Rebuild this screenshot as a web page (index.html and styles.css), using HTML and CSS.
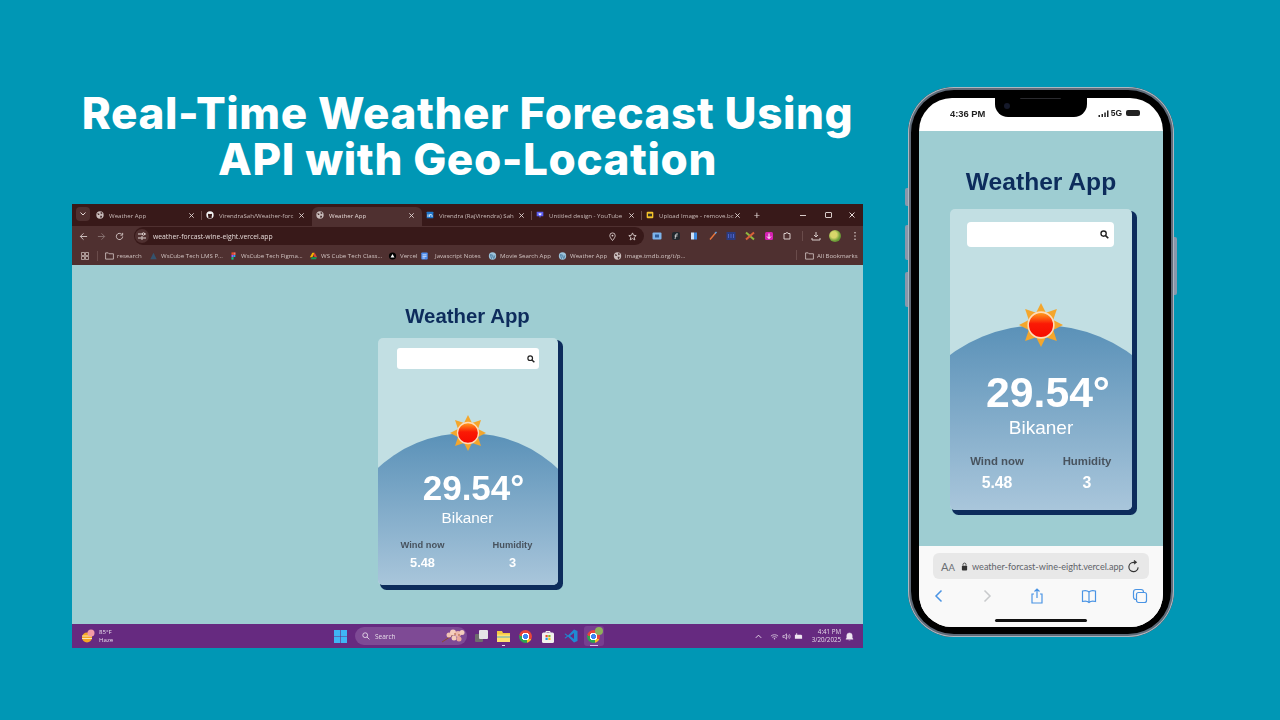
FILE: index.html
```html
<!DOCTYPE html>
<html lang="en">
<head>
<meta charset="utf-8">
<title>Real-Time Weather Forecast</title>
<link rel="stylesheet" href="styles.css">
</head>
<body>
<svg class="sprite" aria-hidden="true">
  <defs>
    <linearGradient id="sung" x1="0" y1="0" x2="0" y2="1">
      <stop offset="0" stop-color="#ffa51e"/><stop offset=".45" stop-color="#fb1a05"/><stop offset="1" stop-color="#f50a00"/>
    </linearGradient>
  </defs>
  <symbol id="sun" viewBox="0 0 36 36">
    <g fill="#f4a62c">
      <path id="ray" d="M18 0l4 8h-8z"/>
      <path d="M18 36l4-8h-8z"/><path d="M0 18l8-4v8z"/><path d="M36 18l-8-4v8z"/>
      <path d="M5 5l9 3-6 6z"/><path d="M31 5l-9 3 6 6z"/><path d="M5 31l9-3-6-6z"/><path d="M31 31l-9-3 6-6z"/>
    </g>
    <circle cx="18" cy="18" r="10.5" fill="url(#sung)" stroke="#ffdcb8" stroke-width="1.3"/>
  </symbol>
  <symbol id="globe" viewBox="0 0 12 12">
    <circle cx="6" cy="6" r="5.5" fill="#c9bcbb"/>
    <path d="M2 3l3 1 0 2-2 0zM7 1l3 2-2 2-1-1zM6 7l3 0 0 2-2 2z" fill="#4b3030"/>
  </symbol>
  <symbol id="wp" viewBox="0 0 12 12">
    <circle cx="6" cy="6" r="5.5" fill="#9dc4dc"/>
    <path d="M2.5 4l2 6 1-3-1-3zM6 4l2 6 1.6-5" fill="none" stroke="#3d6f96" stroke-width="1"/>
  </symbol>
  <symbol id="x" viewBox="0 0 8 8">
    <path d="M1.5 1.5l5 5M6.500 1.500l-5 5" stroke="#e6dad8" stroke-width="1" fill="none"/>
  </symbol>
  <symbol id="folder" viewBox="0 0 10 9">
    <path d="M.6 1h3l1 1h4.800v6H.6z" fill="none" stroke="#d5c8c6" stroke-width=".9"/>
  </symbol>
  <symbol id="mag" viewBox="0 0 10 10">
    <circle cx="4" cy="4" r="2.900" fill="none" stroke="#222" stroke-width="1.500"/>
    <path d="M6.200 6.200l3 3" stroke="#222" stroke-width="1.800"/>
  </symbol>
</svg>

<main class="slide">
  <section class="left">
    <h1 class="headline">Real-Time Weather Forecast Using<br>API with Geo-Location</h1>

    <div class="browser">
      <div class="tabstrip">
        <span class="tab-menu"><svg width="6" height="4" viewBox="0 0 6 4"><path d="M.5.500L3 3 5.500.500" fill="none" stroke="#e6dad8"/></svg></span>
        <div class="tab">
          <svg class="fav"><use href="#globe"/></svg><span class="tab-title">Weather App</span><svg class="tab-x"><use href="#x"/></svg>
        </div>
        <div class="tab tab-sep">
          <svg class="fav" viewBox="0 0 12 12"><circle cx="6" cy="6" r="5.500" fill="#f2f2f2"/><path d="M3.500 11V8.500L3 6.500V4l1.500.5h3L9 4v2.500l-.5 2V11z" fill="#3a1a1a"/></svg><span class="tab-title">VirendraSah/Weather-forc</span><svg class="tab-x"><use href="#x"/></svg>
        </div>
        <div class="tab tab-active">
          <svg class="fav"><use href="#globe"/></svg><span class="tab-title">Weather App</span><svg class="tab-x"><use href="#x"/></svg>
        </div>
        <div class="tab">
          <svg class="fav" viewBox="0 0 12 12"><rect x="1" y="1" width="10" height="10" rx="1" fill="#1c74c9"/><path d="M3 5v4M5.500 9V5M5.500 7c0-2.500 3.500-2.500 3.500 0v2" stroke="#fff" stroke-width="1.200" fill="none"/></svg><span class="tab-title">Virendra (RajVirendra) Sah</span><svg class="tab-x"><use href="#x"/></svg>
        </div>
        <div class="tab tab-sep">
          <svg class="fav" viewBox="0 0 12 12"><path d="M1 1h10v7H7l-1 3-1-3H1z" fill="#5a5cf0"/><path d="M6 7L3.500 4.500C3.500 3 5.500 3 6 4c.5-1 2.500-1 2.500.5z" fill="#f5f5ff"/></svg><span class="tab-title">Untitled design - YouTube</span><svg class="tab-x"><use href="#x"/></svg>
        </div>
        <div class="tab tab-sep tab-last">
          <svg class="fav" viewBox="0 0 12 12"><rect x="1" y="1" width="10" height="10" rx="1.500" fill="#f4c22b"/><path d="M3 4h6v4H3z" fill="#3b3325"/></svg><span class="tab-title">Upload Image - remove.bc</span><svg class="tab-x"><use href="#x"/></svg>
        </div>
        <span class="tab-plus">+</span>
        <div class="winctl">
          <span class="win-min"></span>
          <span class="win-max"></span>
          <svg class="win-x"><use href="#x"/></svg>
        </div>
      </div>

      <div class="toolbar">
        <div class="nav">
          <svg class="nav-ic" viewBox="0 0 10 10"><path d="M9 5H1.500M5 1.500L1.500 5 5 8.500" fill="none" stroke="#d8cbc9"/></svg>
          <svg class="nav-ic" viewBox="0 0 10 10"><path d="M1 5h7.500M5 1.500L8.500 5 5 8.500" fill="none" stroke="#8a7574"/></svg>
          <svg class="nav-ic" viewBox="0 0 10 10"><path d="M8.500 5A3.500 3.500 0 1 1 7.400 2.400M8.500 1v2.500H6" fill="none" stroke="#d8cbc9"/></svg>
        </div>
        <div class="omnibox">
          <span class="tune"><svg width="8" height="8" viewBox="0 0 8 8"><path d="M0 2h4M0 6h2M6 6h2M7 2h1" stroke="#e6dad8"/><circle cx="5.500" cy="2" r="1.200" fill="none" stroke="#e6dad8"/><circle cx="4" cy="6" r="1.200" fill="none" stroke="#e6dad8"/></svg></span>
          <span class="url">weather-forcast-wine-eight.vercel.app</span>
          <svg class="omni-ic" viewBox="0 0 10 10"><path d="M5 9.500C3 7 2 5.500 2 4a3 3 0 0 1 6 0c0 1.500-1 3-3 5.500z" fill="none" stroke="#e6dad8" stroke-width=".9"/><circle cx="5" cy="4" r="1" fill="#e6dad8"/></svg>
          <svg class="omni-ic" viewBox="0 0 10 10"><path d="M5 1l1.200 2.700 2.900.3-2.200 1.900.7 2.900L5 7.300 2.400 8.800l.7-2.900L.9 4l2.900-.3z" fill="none" stroke="#e6dad8" stroke-width=".9"/></svg>
        </div>
        <div class="exts">
          <svg class="ext" viewBox="0 0 10 10"><rect x=".5" y="1.500" width="9" height="7" rx="1" fill="#7cb4ec"/><rect x="3" y="3.500" width="4" height="3" fill="#2f5d9a"/></svg>
          <svg class="ext" viewBox="0 0 10 10"><rect x="1" y="1" width="8" height="8" rx="2" fill="#22282e"/><path d="M4 8l1-5h2M3.500 5h3" stroke="#e6e6e6" stroke-width=".8" fill="none"/></svg>
          <svg class="ext" viewBox="0 0 10 10"><path d="M2 1.500h3v7H2z" fill="#cfe2f7"/><path d="M5 1.500h3v7H5z" fill="#3e8ae0"/></svg>
          <svg class="ext" viewBox="0 0 10 10"><path d="M2 8.500L7.500 2" stroke="#e8743b" stroke-width="1.400"/><path d="M7 2.500L8.500 1" stroke="#5fa4e8" stroke-width="1.400"/></svg>
          <svg class="ext" viewBox="0 0 10 10"><rect x=".5" y="1" width="9" height="8" fill="#2b3b80"/><path d="M2.500 3v4M5 3v4M7.500 3v4" stroke="#4f63c7"/></svg>
          <svg class="ext" viewBox="0 0 10 10"><path d="M1 1.500l8 7" stroke="#8fb83f" stroke-width="2"/><path d="M9 1.500l-8 7" stroke="#d9603a" stroke-width="2"/></svg>
          <svg class="ext" viewBox="0 0 10 10"><rect x="1" y="1" width="8" height="8" rx="1.500" fill="#d621b3"/><path d="M5 2.500v5M3 5.500l2 2 2-2" stroke="#fff" fill="none"/></svg>
          <svg class="ext" viewBox="0 0 10 10"><path d="M2 2.500h2a1 1 0 0 1 2 0h2v5.500H2z" fill="none" stroke="#d8cbc9"/></svg>
          <span class="ext-sep"></span>
          <svg class="ext" viewBox="0 0 10 10"><path d="M5 1v5M3 4l2 2 2-2M1 7v2h8V7" fill="none" stroke="#d8cbc9"/></svg>
          <span class="avatar"></span>
          <svg class="ext" viewBox="0 0 10 10"><circle cx="5" cy="1.800" r=".8" fill="#d8cbc9"/><circle cx="5" cy="5" r=".8" fill="#d8cbc9"/><circle cx="5" cy="8.200" r=".8" fill="#d8cbc9"/></svg>
        </div>
      </div>

      <div class="bookmarks">
        <div class="bm-apps">
          <svg width="8" height="8" viewBox="0 0 8 8"><path d="M.5.500h3v3h-3zM4.500.500h3v3h-3zM.5 4.500h3v3h-3zM4.500 4.500h3v3h-3z" fill="none" stroke="#d5c8c6" stroke-width=".7"/></svg>
        </div>
        <div class="bm"><svg class="bm-ic"><use href="#folder"/></svg><span>research</span></div>
        <div class="bm"><svg class="bm-ic" viewBox="0 0 10 10"><path d="M5 1L1 9h8z" fill="#34536e"/></svg><span>WsCube Tech LMS P...</span></div>
        <div class="bm"><svg class="bm-ic" viewBox="0 0 10 10"><rect x="2.500" y=".5" width="2.500" height="3" fill="#f24e1e"/><rect x="5" y=".5" width="2.500" height="3" fill="#ff7262"/><rect x="2.500" y="3.500" width="2.500" height="3" fill="#a259ff"/><circle cx="6.200" cy="5" r="1.300" fill="#1abcfe"/><rect x="2.500" y="6.500" width="2.500" height="3" fill="#0acf83"/></svg><span>WsCube Tech Figma...</span></div>
        <div class="bm"><svg class="bm-ic" viewBox="0 0 10 10"><path d="M3.500 1h3l-3 5.500H.5z" fill="#f4b400"/><path d="M6.500 1l3 5.500h-3L5 3.800z" fill="#db4437"/><path d="M3 6.500h6.500L8 9H1.500z" fill="#0f9d58"/></svg><span>WS Cube Tech Class...</span></div>
        <div class="bm"><svg class="bm-ic" viewBox="0 0 10 10"><circle cx="5" cy="5" r="4.500" fill="#000"/><path d="M5 2.500L7.500 7h-5z" fill="#fff"/></svg><span>Vercel</span></div>
        <div class="bm bm-wide"><svg class="bm-ic" viewBox="0 0 10 10"><rect x="1" y=".5" width="8" height="9" rx="1" fill="#4d8df0"/><path d="M2.500 3.500h5M2.500 5.500h5M2.500 7.500h3" stroke="#fff" stroke-width=".8"/></svg><span>Javascript Notes</span></div>
        <div class="bm"><svg class="bm-ic"><use href="#wp"/></svg><span>Movie Search App</span></div>
        <div class="bm"><svg class="bm-ic"><use href="#wp"/></svg><span>Weather App</span></div>
        <div class="bm"><svg class="bm-ic"><use href="#globe"/></svg><span>image.tmdb.org/t/p...</span></div>
        <div class="bm bm-all"><svg class="bm-ic"><use href="#folder"/></svg><span>All Bookmarks</span></div>
      </div>

      <div class="page">
        <h2 class="app-title">Weather App</h2>
        <div class="card">
          <div class="search"><svg class="search-ic"><use href="#mag"/></svg></div>
          <div class="panel">
            <svg class="sun"><use href="#sun"/></svg>
            <div class="temp">29.54°</div>
            <div class="city">Bikaner</div>
            <div class="stats">
              <div class="stat"><div class="stat-label">Wind now</div><div class="stat-value">5.48</div></div>
              <div class="stat"><div class="stat-label">Humidity</div><div class="stat-value">3</div></div>
            </div>
          </div>
        </div>
      </div>

      <div class="taskbar">
        <div class="tb-weather">
          <span class="tb-wicon"><svg width="15" height="14" viewBox="0 0 15 14"><circle cx="6" cy="8.500" r="5" fill="#f5a623"/><path d="M1 7h10M1 9.500h10" stroke="#f7e3b5"/><circle cx="10" cy="4" r="3.500" fill="#f29aa6"/></svg></span>
          <div class="tb-wtext"><span>85°F</span><span>Haze</span></div>
        </div>
        <div class="tb-center">
          <svg class="tb-win" viewBox="0 0 13 13"><path d="M0 0h6.200v6.200H0zM6.800 0H13v6.200H6.800zM0 6.800h6.200V13H0zM6.800 6.800H13V13H6.800z" fill="#3fb5f5"/></svg>
          <div class="tb-search">
            <svg width="8" height="8" viewBox="0 0 10 10"><circle cx="4" cy="4" r="3" fill="none" stroke="#e7dcea" stroke-width="1.100"/><path d="M6.200 6.200l3 3" stroke="#e7dcea" stroke-width="1.100"/></svg>
            <span class="tb-search-text">Search</span>
            <svg class="tb-flower" width="24" height="14" viewBox="0 0 24 14"><path d="M1 13L12 6" stroke="#8a4b2a"/><circle cx="8" cy="6" r="2.500" fill="#f2c4b4"/><circle cx="12" cy="3.500" r="3" fill="#f5cdbd"/><circle cx="17" cy="5" r="3" fill="#eeb8ab"/><circle cx="21" cy="3.500" r="2.500" fill="#f5cdbd"/><circle cx="13" cy="9" r="2.500" fill="#f5cdbd"/><circle cx="18" cy="10" r="2.500" fill="#e9a99c"/><circle cx="14" cy="5" r=".8" fill="#a5522e"/><circle cx="18" cy="6" r=".8" fill="#a5522e"/></svg>
          </div>
          <div class="tb-apps">
            <span class="tb-app"><svg width="13" height="12" viewBox="0 0 13 12"><rect x="0" y="4" width="8" height="8" rx="1" fill="#6d6d6d"/><rect x="4" y="0" width="9" height="9" rx="1" fill="#e5e5e5"/></svg></span>
            <span class="tb-app tb-open"><svg width="13" height="11" viewBox="0 0 13 11"><path d="M0 0h5l1 2h7v9H0z" fill="#f5c842"/><path d="M0 3.500h13V11H0z" fill="#ffe070"/><path d="M0 6h13" stroke="#2d9fd9" stroke-width=".8"/></svg></span>
            <span class="tb-app"><span class="chrome"></span></span>
            <span class="tb-app"><svg width="12" height="13" viewBox="0 0 12 13"><rect y="2.500" width="12" height="10.500" rx="1.500" fill="#f3f1ee"/><path d="M4 3V1.500h4V3" stroke="#f3f1ee" fill="none"/><rect x="3.500" y="5" width="2.200" height="2.200" fill="#e8512a"/><rect x="6.300" y="5" width="2.200" height="2.200" fill="#7db928"/><rect x="3.500" y="7.800" width="2.200" height="2.200" fill="#1a9be8"/><rect x="6.300" y="7.800" width="2.200" height="2.200" fill="#f9b912"/></svg></span>
            <span class="tb-app"><svg width="14" height="14" viewBox="0 0 14 14"><path d="M10 .5L4 6.500 1.500 4.500.5 5l2.500 2-2.500 2 1 .5L4 7.500l6 6 3.500-1.500v-10zM10 4v6L6 7z" fill="#1f8ad2"/></svg></span>
            <span class="tb-app tb-active"><span class="chrome"></span><span class="tb-badge"></span></span>
          </div>
        </div>
        <div class="tb-tray">
          <svg class="tray-ic" viewBox="0 0 10 10"><path d="M2 6.500L5 3.500l3 3" fill="none" stroke="#efe6f1"/></svg>
          <svg class="tray-ic" viewBox="0 0 10 10"><path d="M1 4.500c2.500-2 5.500-2 8 0M2.500 6c1.500-1 3.500-1 5 0" fill="none" stroke="#dccfe1" stroke-width=".9"/><circle cx="5" cy="7.500" r=".8" fill="#dccfe1"/></svg>
          <svg class="tray-ic" viewBox="0 0 10 10"><path d="M1 4h2l2-2v6L3 6H1z" fill="none" stroke="#e5dae8" stroke-width=".8"/><path d="M6.500 3.500c.8 1 .8 2 0 3M8 2.500c1.300 1.500 1.300 3.500 0 5" fill="none" stroke="#e5dae8" stroke-width=".8"/></svg>
          <svg class="tray-ic" viewBox="0 0 10 10"><path d="M1 3h1.500V1.500h1V3H8l1 1v3.500H1z" fill="#efe6f1"/></svg>
          <div class="tb-clock"><span>4:41 PM</span><span>3/20/2025</span></div>
          <svg class="tb-bell" viewBox="0 0 10 10"><path d="M5 1a3 3 0 0 0-3 3v2.500L1 8h8L8 6.500V4a3 3 0 0 0-3-3zM4 9h2" fill="#efe6f1" stroke="#efe6f1" stroke-width=".5"/></svg>
        </div>
      </div>
    </div>
  </section>

  <aside class="phone">
    <span class="side side-a"></span>
    <span class="side side-b"></span>
    <span class="side side-c"></span>
    <span class="side side-d"></span>
    <div class="screen">
      <span class="notch"><span class="speaker"></span><span class="camera"></span></span>
      <div class="status">
        <span class="status-time">4:36 PM</span>
        <div class="status-right">
          <svg width="11" height="7" viewBox="0 0 11 7"><path d="M.5 5h1.500v2H.5zM3.500 4H5v3H3.500zM6.300 2.500h1.500V7H6.300zM9 .5h1.500V7H9z" fill="#222"/></svg>
          <span class="status-5g">5G</span>
          <span class="battery"></span>
        </div>
      </div>
      <div class="page page-phone">
        <h2 class="app-title">Weather App</h2>
        <div class="card">
          <div class="search"><svg class="search-ic"><use href="#mag"/></svg></div>
          <div class="panel">
            <svg class="sun"><use href="#sun"/></svg>
            <div class="temp">29.54°</div>
            <div class="city">Bikaner</div>
            <div class="stats">
              <div class="stat"><div class="stat-label">Wind now</div><div class="stat-value">5.48</div></div>
              <div class="stat"><div class="stat-label">Humidity</div><div class="stat-value">3</div></div>
            </div>
          </div>
        </div>
      </div>
      <div class="safari">
        <div class="safari-url">
          <span class="aa"><span class="aa-big">A</span><span class="aa-small">A</span></span>
          <svg class="lock" viewBox="0 0 8 10"><rect x="1" y="4" width="6" height="5.500" rx="1" fill="#333"/><path d="M2.300 4V2.800a1.700 1.700 0 0 1 3.400 0V4" fill="none" stroke="#333"/></svg>
          <span class="safari-text">weather-forcast-wine-eight.vercel.app</span>
          <svg class="safari-reload" viewBox="0 0 14 14"><path d="M12 8a5 5 0 1 1-5-5.500h2M7.500 .5L10 2.500 7.500 4.500" fill="none" stroke="#333" stroke-width="1.200"/></svg>
        </div>
        <div class="safari-icons">
          <svg class="sf-ic" viewBox="0 0 16 16"><path d="M10.500 2.500L5 8l5.500 5.500" fill="none" stroke="#4a94e4" stroke-width="1.500"/></svg>
          <svg class="sf-ic" viewBox="0 0 16 16"><path d="M5.500 2.500L11 8l-5.500 5.500" fill="none" stroke="#c8cacc" stroke-width="1.500"/></svg>
          <svg class="sf-ic" viewBox="0 0 16 16"><path d="M5 6H3v9h10V6h-2M8 10V1M5.500 3.500L8 1l2.500 2.500" fill="none" stroke="#4a94e4" stroke-width="1.200"/></svg>
          <svg class="sf-ic" viewBox="0 0 16 16"><path d="M8 4C6.500 2.500 3.500 2.500 1.500 3v10.500c2-.5 5-.5 6.500 1 1.500-1.500 4.500-1.500 6.500-1V3C12.500 2.500 9.500 2.500 8 4zV14.500" fill="none" stroke="#4a94e4" stroke-width="1.200"/></svg>
          <svg class="sf-ic" viewBox="0 0 16 16"><rect x="4.500" y="4.500" width="10" height="10" rx="2" fill="none" stroke="#4a94e4" stroke-width="1.200"/><path d="M4 11.500c-1.500 0-2.500-1-2.500-2.500V4c0-1.500 1-2.500 2.500-2.500h5c1.500 0 2.500 1 2.500 2.500" fill="none" stroke="#4a94e4" stroke-width="1.200"/></svg>
        </div>
        <span class="home-bar"></span>
      </div>
    </div>
  </aside>
</main>
</body>
</html>
```

FILE: styles.css
```css
* { box-sizing: border-box; }

html, body {
  margin: 0;
  width: 1280px;
  height: 720px;
  overflow: hidden;
}

body {
  background: #0097b5;
  font-family: "Liberation Sans", Arial, sans-serif;
}

.sprite {
  position: absolute;
  width: 0;
  height: 0;
}

.slide {
  display: flex;
  align-items: flex-start;
  gap: 45px;
  padding-left: 72px;
}

.left {
  width: 791px;
  padding-top: 90px;
}

.headline {
  margin: 0 0 22px;
  font-family: Inter, "Liberation Sans", sans-serif;
  font-weight: 800;
  font-size: 44px;
  line-height: 46px;
  letter-spacing: .6px;
  text-align: center;
  color: #fff;
  white-space: nowrap;
}

/* ---------- browser ---------- */
.browser {
  display: flex;
  flex-direction: column;
  height: 444px;
  font-family: "Open Sans", "Noto Sans", sans-serif;
  color: #d8cbc9;
  filter: blur(.3px);
}

.tabstrip {
  display: flex;
  align-items: stretch;
  height: 22px;
  padding: 3px 0 0 4px;
  background: #381919;
}

.tab-menu {
  display: flex;
  align-items: center;
  justify-content: center;
  width: 14px;
  height: 14px;
  margin: 0 2px 0 0;
  border-radius: 4px;
  background: #4f3030;
}

.tab {
  position: relative;
  display: flex;
  align-items: center;
  width: 110px;
  height: 19px;
  padding: 0 7px 3px 4px;
  font-size: 6.100px;
  color: #c9bbb9;
}

.tab-sep::before {
  content: "";
  position: absolute;
  left: -1px;
  top: 4px;
  width: 1px;
  height: 9px;
  background: #6a4c4b;
}

.tab-active {
  background: #4f3030;
  border-radius: 6px 6px 0 0;
  color: #e2d6d4;
  padding-left: 4px;
}

.tab-last { width: 106px; }

.fav {
  flex: none;
  width: 8px;
  height: 8px;
  margin-right: 5px;
}

.tab-title {
  flex: 1;
  white-space: nowrap;
}

.tab-x {
  flex: none;
  width: 7px;
  height: 7px;
}

.tab-plus {
  width: 18px;
  font-size: 11px;
  line-height: 16px;
  text-align: center;
  color: #e6dad8;
}

.winctl {
  display: flex;
  align-items: center;
  gap: 16px;
  height: 16px;
  margin-left: auto;
  padding-right: 7px;
}

.win-min { width: 6px; height: 1px; margin-right: 3px; background: #d8cbc9; }
.win-max { width: 7px; height: 6px; border: 1px solid #d8cbc9; border-radius: 1px; }
.win-x { width: 8px; height: 8px; }

.toolbar {
  display: flex;
  align-items: center;
  height: 20px;
  padding-left: 7px;
  background: #4f3030;
}

.nav {
  display: flex;
  gap: 9px;
  width: 55px;
}

.nav-ic { width: 9px; height: 9px; }

.omnibox {
  display: flex;
  align-items: center;
  gap: 8px;
  width: 510px;
  height: 18px;
  padding: 0 7px 0 1px;
  border-radius: 9px;
  background: #381919;
}

.tune {
  display: flex;
  align-items: center;
  justify-content: center;
  width: 14px;
  height: 14px;
  margin-right: -4px;
  border-radius: 50%;
  background: #4f3030;
}

.url {
  flex: 1;
  font-size: 6.800px;
  color: #e4d9d7;
}

.omni-ic { width: 9px; height: 9px; margin-left: 3px; }

.exts {
  display: flex;
  align-items: center;
  gap: 8.600px;
  margin-left: 8px;
}

.ext { width: 10px; height: 10px; }

.ext-sep {
  width: 1px;
  height: 10px;
  margin: 0 0 0 1px;
  background: #6a4c4b;
}

.avatar {
  width: 12px;
  height: 12px;
  margin: 0 -.5px;
  border-radius: 50%;
  background: radial-gradient(circle at 40% 40%, #d8d66a 0 30%, #6f9f3a 60%, #4c7a28);
}

.bookmarks {
  display: grid;
  grid-template-columns: 33px 44px 80px 80px 79px 32px 68px 70px 55px 1fr 58px;
  align-items: center;
  height: 19px;
  background: #4f3030;
  font-size: 6.100px;
  color: #cfc2c0;
  white-space: nowrap;
}

.bm-apps {
  display: flex;
  align-items: center;
  height: 10px;
  padding-left: 9px;
  margin-right: 7px;
  border-right: 1px solid #6a4c4b;
}

.bm {
  display: flex;
  align-items: center;
  gap: 3px;
}

.bm-wide { gap: 6px; }

.bm-ic { flex: none; width: 9px; height: 8px; }

.bm-all {
  position: relative;
  grid-column: 11;
}

.bm-all::before {
  content: "";
  position: absolute;
  left: -9px;
  top: -1px;
  width: 1px;
  height: 10px;
  background: #6a4c4b;
}

.page {
  display: flex;
  flex-direction: column;
  align-items: center;
  gap: 10px;
  height: 359px;
  padding-top: 39px;
  background: #9ecdd2;
  font-family: "Liberation Sans", Arial, sans-serif;
}

.app-title {
  margin: 0;
  font-size: 20.400px;
  line-height: 24px;
  font-weight: 700;
  color: #0d2c5c;
}

.card {
  display: flex;
  flex-direction: column;
  width: 180px;
  height: 247px;
  padding-top: 10px;
  border-radius: 5px;
  background: #c2dfe3;
  box-shadow: 3.500px 3.500px 0 1.500px #0d2c5c;
}

.search {
  display: flex;
  align-items: center;
  justify-content: flex-end;
  align-self: flex-start;
  width: 142px;
  height: 21px;
  margin-left: 19px;
  padding-right: 4px;
  border-radius: 3px;
  background: #fff;
}

.search-ic { width: 8px; height: 8px; }

.panel {
  position: relative;
  z-index: 0;
  display: flex;
  flex-direction: column;
  align-items: center;
  flex: 1;
  margin-top: 64px;
  color: #fff;
}

.panel::before {
  content: "";
  position: absolute;
  inset: 0;
  z-index: -1;
  border-radius: 0 0 5px 5px;
  background: linear-gradient(#5a91b8, #a9c6db);
  clip-path: circle(133px at 50% 133px);
}

.sun {
  flex: none;
  width: 36px;
  height: 36px;
  margin-top: -18px;
}

.temp {
  margin-top: 17px;
  padding-left: 12px;
  font-size: 35px;
  line-height: 40px;
  font-weight: 700;
}

.city {
  font-size: 15.300px;
  line-height: 20px;
}

.stats {
  display: grid;
  grid-template-columns: 90px 90px;
  margin-top: 11px;
  text-align: center;
}

.stat-label {
  font-size: 9.300px;
  line-height: 12px;
  font-weight: 700;
  color: #48535e;
}

.stat-value {
  margin-top: 5px;
  font-size: 12.800px;
  line-height: 14px;
  font-weight: 700;
}

/* ---------- taskbar ---------- */
.taskbar {
  display: flex;
  align-items: center;
  height: 24px;
  background: #662a80;
  color: #e5dae8;
}

.tb-weather {
  display: flex;
  align-items: center;
  gap: 3px;
  width: 262px;
  padding-left: 9px;
}

.tb-wicon { display: flex; }

.tb-wtext {
  display: flex;
  flex-direction: column;
  font-size: 6.100px;
  line-height: 8px;
}

.tb-center {
  display: flex;
  align-items: center;
}

.tb-win { width: 13px; height: 13px; }

.tb-search {
  display: flex;
  align-items: center;
  gap: 5px;
  width: 112px;
  height: 18px;
  margin-left: 8px;
  padding: 0 2px 0 7px;
  border-radius: 9px;
  background: #7e4a95;
  font-size: 6.500px;
}

.tb-search-text { flex: 1; }

.tb-apps {
  display: flex;
  align-items: center;
  gap: 2.400px;
  margin-left: 4px;
}

.tb-app {
  position: relative;
  display: flex;
  align-items: center;
  justify-content: center;
  width: 20px;
  height: 20px;
}

.tb-open::after,
.tb-active::after {
  content: "";
  position: absolute;
  left: 50%;
  bottom: 0;
  width: 3px;
  height: 1px;
  margin-left: -1px;
  background: #e5dae8;
}

.tb-active { margin-left: 1px; border-radius: 3px; background: #773e90; }
.tb-active::after { width: 8px; margin-left: -4px; background: #e3b8ef; }

.chrome {
  width: 13px;
  height: 13px;
  border-radius: 50%;
  background:
    radial-gradient(circle, #3f86f0 0 28%, #fff 29% 40%, transparent 41%),
    conic-gradient(#e8453c 0 33%, #f7c325 33% 45%, #2ea44f 45% 78%, #e8453c 78%);
}

.tb-badge {
  position: absolute;
  top: 1px;
  right: 1px;
  width: 8px;
  height: 8px;
  border-radius: 50%;
  background: #8fb05a;
}

.tb-tray {
  display: flex;
  align-items: center;
  gap: 3px;
  margin-left: auto;
  padding-right: 9px;
}

.tray-ic { width: 9px; height: 9px; }
.tray-ic:first-child { margin-right: 4px; }

.tb-clock {
  display: flex;
  flex-direction: column;
  align-items: flex-end;
  margin-left: 6px;
  font-size: 6.200px;
  line-height: 8px;
}

.tb-bell { width: 9px; height: 9px; margin-left: 1px; }

/* ---------- phone ---------- */
.phone {
  position: relative;
  flex: none;
  width: 266px;
  height: 550px;
  margin-top: 87px;
  padding: 11px;
  border-radius: 46px;
  background: #000;
  box-shadow: inset 0 0 0 1px #aeb7c1, inset 0 0 0 3px #5f6b79;
}

.side {
  position: absolute;
  width: 3px;
  background: #8a97ab;
}

.side-a { left: -3px; top: 101px; height: 18px; border-radius: 2px 0 0 2px; }
.side-b { left: -3px; top: 138px; height: 35px; border-radius: 2px 0 0 2px; }
.side-c { left: -3px; top: 185px; height: 35px; border-radius: 2px 0 0 2px; }
.side-d { right: -3px; top: 150px; height: 58px; border-radius: 0 2px 2px 0; }

.screen {
  position: relative;
  display: flex;
  flex-direction: column;
  height: 529px;
  border-radius: 33px;
  background: #fff;
  overflow: hidden;
  filter: blur(.3px);
}

.notch {
  position: absolute;
  left: 76px;
  top: 0;
  width: 92px;
  height: 19px;
  border-radius: 0 0 13px 13px;
  background: #000;
}

.speaker {
  position: absolute;
  left: 25px;
  top: -1px;
  width: 41px;
  height: 2px;
  border-radius: 1px;
  background: #2a2a2e;
}

.camera {
  position: absolute;
  left: 9px;
  top: 5px;
  width: 6px;
  height: 6px;
  border-radius: 50%;
  background: #15192a;
}

.status {
  display: flex;
  align-items: center;
  justify-content: space-between;
  height: 33px;
  padding: 0 23px 3px 31px;
  font-weight: 700;
  font-size: 9.400px;
  color: #222;
}

.status-right {
  display: flex;
  align-items: center;
  gap: 2px;
}

.status-5g { margin-right: 2px; font-size: 8.500px; }

.battery {
  width: 14px;
  height: 6px;
  border-radius: 2px;
  background: #222;
}

.page-phone {
  gap: 13px;
  height: 415px;
  padding-top: 37px;
}

.page-phone .app-title {
  font-size: 24.600px;
  line-height: 28px;
}

.page-phone .card {
  width: 182px;
  height: 301px;
  padding-top: 13px;
}

.page-phone .search {
  width: 147px;
  height: 25px;
  margin-left: 17px;
  padding-right: 5px;
  border-radius: 4px;
}

.page-phone .search-ic { width: 9px; height: 9px; }

.page-phone .panel { margin-top: 78px; }

.page-phone .panel::before {
  clip-path: circle(154px at 50% 154px);
}

.page-phone .sun {
  width: 44px;
  height: 44px;
  margin-top: -22px;
}

.page-phone .temp {
  margin-top: 21px;
  padding-left: 14px;
  font-size: 42.700px;
  line-height: 48px;
}

.page-phone .city {
  font-size: 19px;
  line-height: 24px;
}

.page-phone .stats {
  margin-top: 14px;
  padding-left: 2px;
}

.page-phone .stat-label {
  font-size: 11.400px;
  line-height: 14px;
}

.page-phone .stat-value {
  margin-top: 6px;
  font-size: 15.800px;
  line-height: 18px;
}

.safari {
  position: relative;
  flex: 1;
  padding: 7px 14px 0;
  background: #f9f9f9;
}

.safari-url {
  display: flex;
  align-items: center;
  height: 26px;
  padding: 0 8px;
  border-radius: 6px;
  background: #e8e8e8;
  font-family: Lato, "Noto Sans", sans-serif;
  color: #5f6368;
}

.aa {
  display: flex;
  align-items: baseline;
  width: 19px;
  flex: none;
  color: #6a6e73;
}

.aa-big { font-size: 11px; }
.aa-small { font-size: 9.500px; }

.lock { flex: none; width: 7px; height: 9px; margin-left: 1px; margin-right: 4px; }

.safari-text {
  width: 154px;
  flex: none;
  white-space: nowrap;
  font-size: 9.100px;
}

.safari-reload { flex: none; width: 13px; height: 13px; margin-left: 1px; }

.safari-icons {
  display: grid;
  grid-template-columns: 48px 50px 52px 51px 16px;
  margin: 9px 0 0 -2px;
}

.sf-ic { width: 16px; height: 16px; }

.home-bar {
  position: absolute;
  left: 76px;
  bottom: 5px;
  width: 92px;
  height: 3px;
  border-radius: 2px;
  background: #111;
}
```
